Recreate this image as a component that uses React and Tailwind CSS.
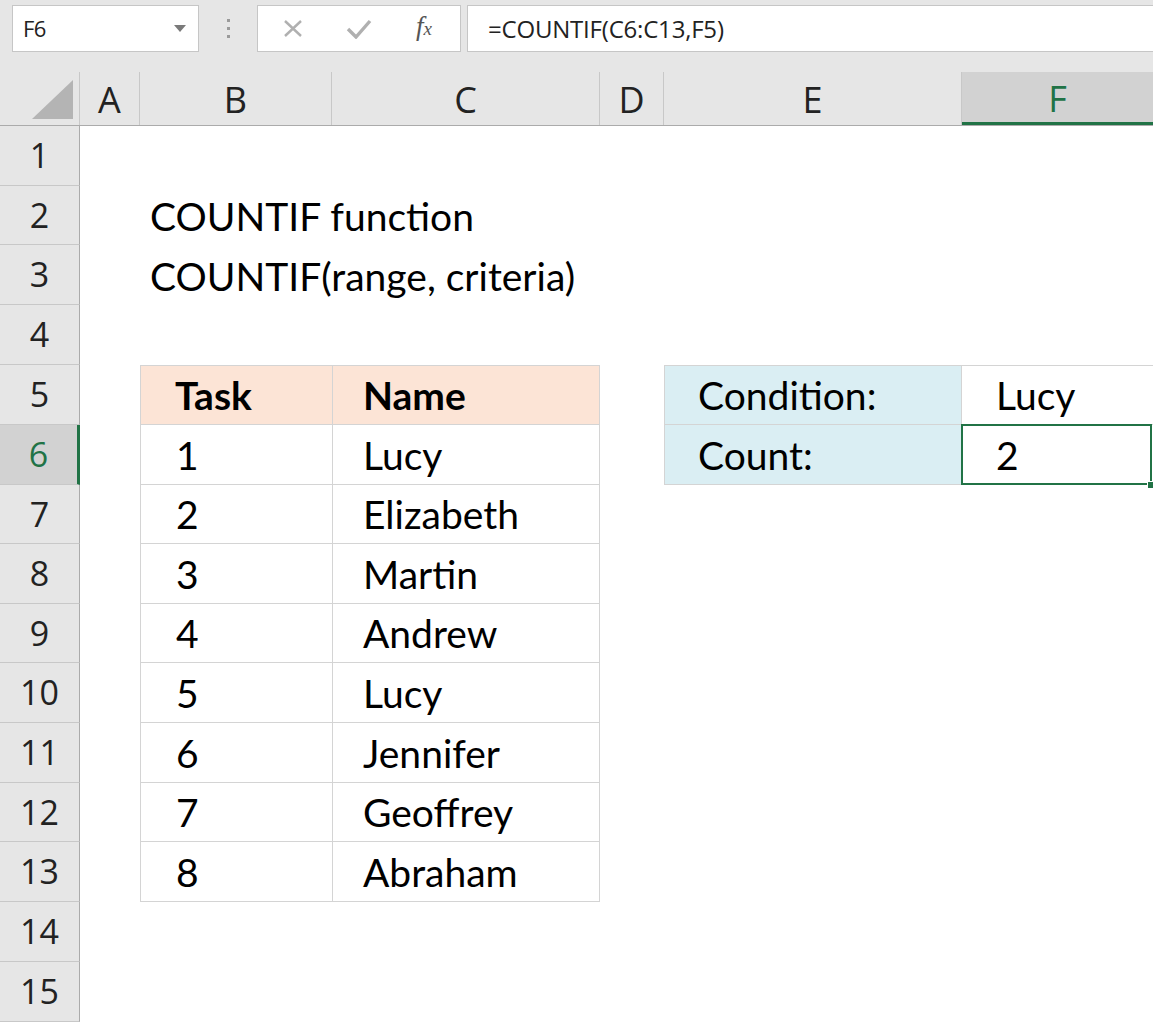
import React from "react";

const cols = [
  { key: "A", w: "w-[60px]" },
  { key: "B", w: "w-[192px]" },
  { key: "C", w: "w-[268px]" },
  { key: "D", w: "w-[64px]" },
  { key: "E", w: "w-[298px]" },
  { key: "F", w: "flex-1" },
];

// row heights add up to the zoomed sheet (about 59.7px each)
const rowHeights = [
  "h-[60px]", "h-[59px]", "h-[60px]", "h-[60px]", "h-[60px]",
  "h-[60px]", "h-[59px]", "h-[60px]", "h-[59px]", "h-[60px]",
  "h-[60px]", "h-[59px]", "h-[60px]", "h-[60px]", "h-[60px]",
];

const tasks = [
  [1, "Lucy"],
  [2, "Elizabeth"],
  [3, "Martin"],
  [4, "Andrew"],
  [5, "Lucy"],
  [6, "Jennifer"],
  [7, "Geoffrey"],
  [8, "Abraham"],
];

const cellFont = "font-['Lato','Carlito',sans-serif] text-[39px] leading-none text-black";
const uiFont = "font-['Open_Sans','Noto_Sans',sans-serif]";

const FormulaBar = () => (
  <div className="flex h-[72px] items-start bg-[#e6e6e6] pt-[5px]">
    <div className="ml-[12px] flex h-[47px] w-[187px] items-center justify-between border border-[#c6c6c6] bg-white pl-[10px] pr-[12px]">
      <span className={`${uiFont} text-[22px] tracking-[-0.5px] text-[#222]`}>F6</span>
      <svg width="12" height="7" viewBox="0 0 12 7">
        <path d="M0 0 L12 0 L6 7 Z" fill="#7a7a7a" />
      </svg>
    </div>
    <div className="flex h-[47px] w-[58px] flex-col items-center justify-center gap-[5px]">
      <span className="h-[3px] w-[3px] bg-[#9a9a9a]" />
      <span className="h-[3px] w-[3px] bg-[#9a9a9a]" />
      <span className="h-[3px] w-[3px] bg-[#9a9a9a]" />
    </div>
    <div className="flex h-[47px] w-[204px] items-center border border-[#c6c6c6] bg-white">
      <svg className="ml-[24px]" width="22" height="17" viewBox="0 0 22 17">
        <path d="M3 1 L19 16 M19 1 L3 16" stroke="#b0b0b0" strokeWidth="2.4" />
      </svg>
      <svg className="ml-[42px]" width="26" height="20" viewBox="0 0 26 20">
        <path d="M2 10 L10 18 L24 2" stroke="#b0b0b0" strokeWidth="3.4" fill="none" />
      </svg>
      <span className="ml-[44px] -mt-[4px] font-['Liberation_Serif',serif] text-[27px] italic leading-none text-[#555]">
        f<span className="text-[19px]">x</span>
      </span>
    </div>
    <div className="ml-[6px] flex h-[47px] flex-1 items-center border border-r-0 border-[#c6c6c6] bg-white pl-[20px]">
      <span className={`${uiFont} text-[24px] tracking-[-0.2px] text-[#222]`}>=COUNTIF(C6:C13,F5)</span>
    </div>
  </div>
);

const ColumnHeaders = () => (
  <div className="flex h-[54px] border-b border-[#ababab] bg-[#e6e6e6]">
    <div className="flex w-[80px] items-end justify-end border-r border-[#c8c8c8] pb-[6px] pr-[6px]">
      <svg width="41" height="39" viewBox="0 0 41 39">
        <path d="M41 0 L41 39 L0 39 Z" fill="#b4b4b4" />
      </svg>
    </div>
    {cols.map((c) =>
      c.key === "F" ? (
        <div
          key={c.key}
          className={`${c.w} ${uiFont} flex items-center justify-center border-b-[3px] border-[#217346] bg-[#d2d2d2] pt-[3px] text-[36px] text-[#217346]`}
        >
          {c.key}
        </div>
      ) : (
        <div
          key={c.key}
          className={`${c.w} ${uiFont} flex items-center justify-center border-r border-[#c8c8c8] pt-[3px] text-[36px] text-[#222]`}
        >
          {c.key}
        </div>
      )
    )}
  </div>
);

const RowHeader = ({ n }) =>
  n === 6 ? (
    <div className={`${uiFont} flex w-[80px] shrink-0 items-center justify-center border-b border-r-[3px] border-b-[#c8c8c8] border-r-[#217346] bg-[#d2d2d2] text-[34px] text-[#217346]`}>
      {n}
    </div>
  ) : (
    <div className={`${uiFont} flex w-[80px] shrink-0 items-center justify-center border-b border-r border-b-[#c8c8c8] border-r-[#ababab] bg-[#e6e6e6] text-[34px] text-[#222]`}>
      {n}
    </div>
  );

const Cell = ({ w, className = "", children }) => (
  <div className={`${w} flex shrink-0 items-end whitespace-nowrap pb-[9px] ${cellFont} ${className}`}>
    {children}
  </div>
);

const Row = ({ n }) => {
  const h = rowHeights[n - 1];
  const task = n >= 6 && n <= 13 ? tasks[n - 6] : null;

  return (
    <div className={`flex ${h}`}>
      <RowHeader n={n} />
      <Cell w="w-[60px]" />
      {n === 2 && (
        <Cell w="w-[192px]" className="overflow-visible pl-[10px]">COUNTIF function</Cell>
      )}
      {n === 3 && (
        <Cell w="w-[192px]" className="overflow-visible pl-[10px]">COUNTIF(range, criteria)</Cell>
      )}
      {n === 5 && (
        <>
          <Cell w="w-[192px]" className="border border-r-0 border-[#d4d4d4] bg-[#fce4d6] pl-[34px] font-bold">Task</Cell>
          <Cell w="w-[268px]" className="border border-[#d4d4d4] bg-[#fce4d6] pl-[30px] font-bold">Name</Cell>
        </>
      )}
      {task && (
        <>
          <Cell w="w-[192px]" className="border-b border-l border-[#d4d4d4] pl-[35px]">{task[0]}</Cell>
          <Cell w="w-[268px]" className="border-x border-b border-[#d4d4d4] pl-[30px]">{task[1]}</Cell>
        </>
      )}
      {!task && n !== 2 && n !== 3 && n !== 5 && (
        <>
          <Cell w="w-[192px]" />
          <Cell w="w-[268px]" />
        </>
      )}
      <Cell w="w-[64px]" />
      {n === 5 && (
        <>
          <Cell w="w-[298px]" className="border border-[#d4d4d4] bg-[#daeef3] pl-[33px]">Condition:</Cell>
          <Cell w="flex-1" className="border-y border-[#d4d4d4] pl-[34px]">Lucy</Cell>
        </>
      )}
      {n === 6 && (
        <>
          <Cell w="w-[298px]" className="border-x border-b border-[#d4d4d4] bg-[#daeef3] pl-[33px]">Count:</Cell>
          <div className="relative flex-1">
            <div className={`absolute -top-[1px] bottom-0 -left-[1px] right-[1px] flex items-end border-2 border-[#217346] pb-[8px] pl-[33px] ${cellFont}`}>
              2
            </div>
            <span className="absolute -bottom-[4px] -right-[1px] h-[8px] w-[7px] border border-white bg-[#217346]" />
          </div>
        </>
      )}
    </div>
  );
};

export default function App() {
  const rows = Array.from({ length: 15 }, (_, i) => i + 1);
  return (
    <div className="h-[1024px] w-[1153px] overflow-hidden bg-white">
      <FormulaBar />
      <ColumnHeaders />
      {rows.map((n) => (
        <Row key={n} n={n} />
      ))}
    </div>
  );
}
